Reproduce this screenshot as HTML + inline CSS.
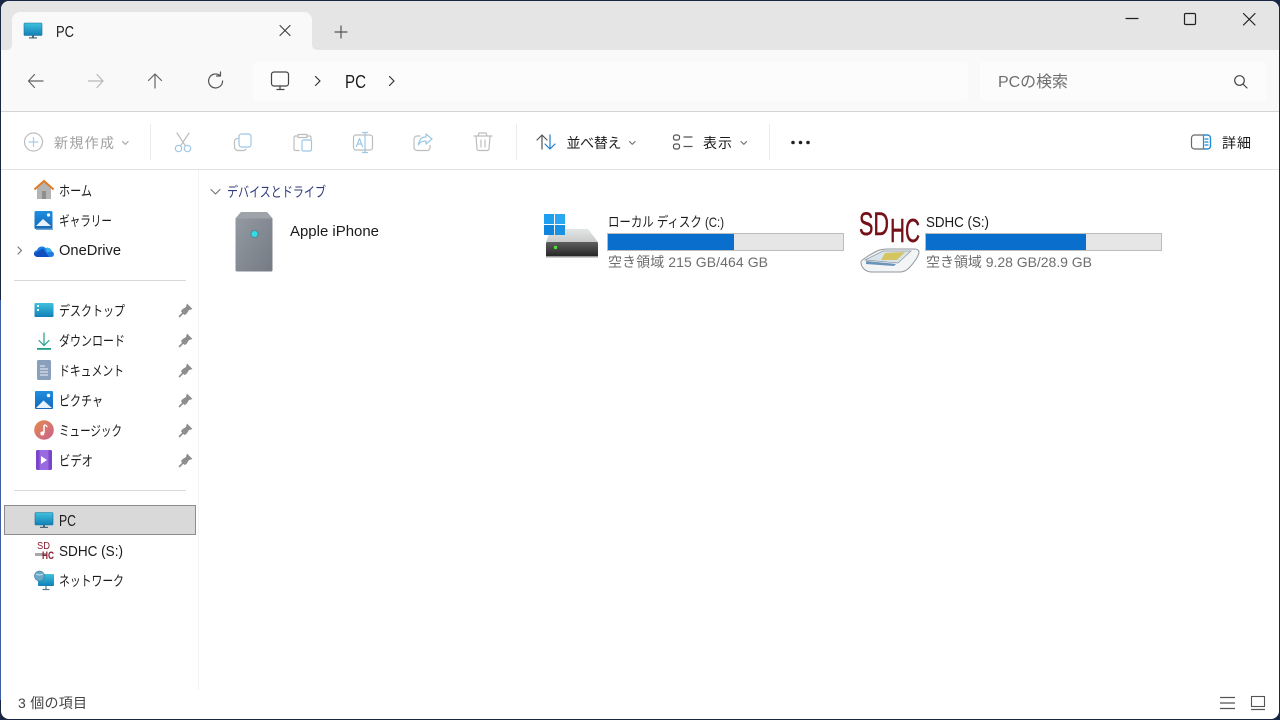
<!DOCTYPE html>
<html lang="ja"><head><meta charset="utf-8"><title>PC</title>
<style>
html,body{margin:0;padding:0;width:1280px;height:720px;overflow:hidden;background:#1a2744}
svg{display:block}
text{font-family:"Liberation Sans","Noto Sans CJK JP",sans-serif;font-size:14px;fill:#1b1b1b}
.g{fill:#6e6e6e}
.d{fill:#a0a0a0}
.s{fill:none;stroke-width:1.2;stroke-linecap:round;stroke-linejoin:round}
</style></head><body>
<svg width="1280" height="720" viewBox="0 0 1280 720" xmlns="http://www.w3.org/2000/svg">
<defs>
<linearGradient id="mon" x1="0" y1="0" x2="0" y2="1"><stop offset="0" stop-color="#3fc1dc"/><stop offset="1" stop-color="#1180b8"/></linearGradient>
<linearGradient id="twr" x1="0" y1="0" x2="1" y2="1"><stop offset="0" stop-color="#959ba3"/><stop offset="1" stop-color="#757b84"/></linearGradient>
<linearGradient id="hdd" x1="0" y1="0" x2="0" y2="1"><stop offset="0" stop-color="#5f5f5f"/><stop offset="1" stop-color="#232323"/></linearGradient>
<linearGradient id="hddt" x1="0" y1="0" x2="0" y2="1"><stop offset="0" stop-color="#e4e6e6"/><stop offset="1" stop-color="#c6c9c9"/></linearGradient>
<linearGradient id="mus" x1="0" y1="0" x2="1" y2="1"><stop offset="0" stop-color="#e58a4e"/><stop offset="1" stop-color="#c8618f"/></linearGradient>
<linearGradient id="pic" x1="0" y1="0" x2="0" y2="1"><stop offset="0" stop-color="#1f8ee0"/><stop offset="1" stop-color="#1668b8"/></linearGradient>
<g id="pin"><path d="M1.500 -7 L7 -1.500 L5.500 -1 L3.500 -0.500 L1 3.500 L-3.500 -1 L0.500 -3.500 L1 -5.500Z" fill="#8c8c8c"/><path d="M-1.500 1.500 L-6 6" stroke="#8c8c8c" stroke-width="1.600" stroke-linecap="round"/><path d="M-3.500 -1 L1 3.500 L-1 4.500 L-4.500 1Z" fill="#8c8c8c"/></g>
<g id="monitor"><rect x="-9" y="-7" width="18" height="12.5" rx="1" fill="url(#mon)" stroke="#1b6f96" stroke-width=".6"/><rect x="-1" y="5.500" width="2" height="2" fill="#4a6a78"/><rect x="-4" y="7.300" width="8" height="1.200" fill="#4a6a78"/></g>
</defs>

<rect x="0" y="0" width="1280" height="720" fill="#1a2744"/>
<rect x="0" y="300" width="1.500" height="400" fill="#3a5fa5"/>
<rect x="1" y="1" width="1278" height="718" rx="8" fill="#ffffff"/>
<!-- title bar -->
<path d="M1 50V9a8 8 0 0 1 8-8H1271a8 8 0 0 1 8 8V50Z" fill="#e5e5e5"/>
<path d="M6 50 Q12 50 12 44 V20 a8 8 0 0 1 8-8 H304 a8 8 0 0 1 8 8 V44 Q312 50 318 50Z" fill="#f9f9f9"/>
<rect x="1" y="50" width="1278" height="61" fill="#f9f9f9"/>
<rect x="1" y="111" width="1278" height="1" fill="#d5d5d5"/>
<rect x="1" y="169" width="1278" height="1" fill="#e3e3e3"/>
<rect x="253" y="62" width="715" height="39" rx="4" fill="#fcfcfc"/>
<rect x="980" y="62" width="286" height="39" rx="4" fill="#fcfcfc"/>

<!-- tab -->
<use href="#monitor" transform="translate(33,30)"/>
<text x="56" y="37" style="font-size:15.500px" textLength="18" lengthAdjust="spacingAndGlyphs">PC</text>
<path d="M280 26.500l10 10M290 26.500l-10 10" transform="translate(0,-1)" class="s" stroke="#444"/>
<path d="M341 26v12M335 32h12" class="s" stroke="#555" stroke-width="1.300"/>

<!-- caption -->
<path d="M1126 18.500h12" class="s" stroke="#222"/>
<rect x="1184.500" y="13.500" width="11" height="11" rx="1.200" class="s" stroke="#222"/>
<path d="M1243.500 13.500l11.500 11.500M1255 13.500l-11.500 11.500" class="s" stroke="#222"/>

<!-- nav -->
<path d="M28.500 81H43M28.500 81l6-6.500M28.500 81l6 6.500" class="s" stroke="#666"/>
<path d="M103 81H88.500M103 81l-6-6.500M103 81l-6 6.500" class="s" stroke="#b8b8b8"/>
<path d="M155 88V74M155 74l-6.500 6.500M155 74l6.500 6.500" class="s" stroke="#666"/>
<path d="M220 75.500a7 7 0 1 0 2.600 5.500M220.500 72v4h-4" class="s" stroke="#555"/>
<rect x="271.500" y="72" width="17" height="14" rx="2.500" class="s" stroke="#444"/>
<path d="M277 89.500h7M280 86v3.500" class="s" stroke="#444"/>
<path d="M315.500 76.500l4.500 4.500-4.500 4.500M389.500 76.500l4.500 4.500-4.500 4.500" class="s" stroke="#333" stroke-width="1.400"/>
<text x="345" y="88" style="font-size:18px" textLength="21" lengthAdjust="spacingAndGlyphs">PC</text>
<text x="998" y="87" class="g" style="font-size:16px" textLength="70" lengthAdjust="spacingAndGlyphs">PCの検索</text>
<circle cx="1239.500" cy="80.500" r="4.800" class="s" stroke="#444"/>
<path d="M1243 84l4 4" class="s" stroke="#444"/>

<!-- command bar -->
<circle cx="33.500" cy="142" r="9" class="s" stroke="#bdbdbd"/>
<path d="M33.500 137.500v9M29 142h9" class="s" stroke="#a8cfe8"/>
<text x="54" y="148" class="d" textLength="60" lengthAdjust="spacing">新規作成</text>
<path d="M122.500 141.500l2.800 2.800 2.800-2.800" class="s" stroke="#aaa" stroke-width="1"/>
<rect x="150" y="124" width="1" height="36" fill="#ececec"/>
<path d="M177 133l8.500 13M189 133l-8.500 13" class="s" stroke="#bdbdbd"/>
<circle cx="178.500" cy="148.500" r="3.200" class="s" stroke="#9cc8e6"/><circle cx="187.500" cy="148.500" r="3.200" class="s" stroke="#9cc8e6"/>
<rect x="239" y="134" width="12" height="13" rx="2.500" class="s" stroke="#9cc8e6"/>
<path d="M238 138.500a3 3 0 0 0-3.500 3V147a3.500 3.500 0 0 0 3.500 3.500h5.500a3 3 0 0 0 2.500-1.500" class="s" stroke="#bdbdbd"/>
<path d="M298 136h-2.500a1.500 1.500 0 0 0-1.500 1.500V149a1.500 1.500 0 0 0 1.500 1.500H299M308 136h2a1.500 1.500 0 0 1 1 1.500V140M298 134.500h9v3h-9z" class="s" stroke="#bdbdbd"/>
<rect x="302" y="140" width="9.500" height="11" rx="1.500" class="s" stroke="#9cc8e6"/>
<rect x="353.500" y="135" width="19" height="15" rx="2.500" class="s" stroke="#bdbdbd"/>
<path d="M365 132.500v20M362.500 132.500h5M362.500 152.500h5" class="s" stroke="#9cc8e6"/>
<path d="M356.500 146.500l3-8 3 8M357.500 144h4" class="s" stroke="#9cc8e6" stroke-width="1"/>
<path d="M420 136h-3a3 3 0 0 0-3 3v8.500a3 3 0 0 0 3 3h10.500a3 3 0 0 0 2.500-3v-2" class="s" stroke="#bdbdbd"/>
<path d="M426 134l6 5-6 5v-3c-4 0-6 1-7.500 4 .5-5 3-8 7.500-8z" class="s" stroke="#9cc8e6"/>
<path d="M474 136h18M478 136l1-3h7l1 3M476 136l1 13a2 2 0 0 0 2 1.500h8a2 2 0 0 0 2-1.500l1-13M481 140v7M485 140v7" class="s" stroke="#bdbdbd"/>
<rect x="516" y="124" width="1" height="36" fill="#ececec"/>
<path d="M542 149V135M542 135l-5 5M542 135l5 5" class="s" stroke="#555"/>
<path d="M550 135v14M550 149l-5-5M550 149l5-5" class="s" stroke="#1f7fc8"/>
<text x="566.500" y="148" textLength="55" lengthAdjust="spacing">並べ替え</text>
<path d="M629.500 141.500l2.800 2.800 2.800-2.800" class="s" stroke="#777" stroke-width="1"/>
<rect x="673.500" y="135" width="6" height="5" rx="2" class="s" stroke="#555"/>
<rect x="673.500" y="144" width="6" height="5" rx="2" class="s" stroke="#555"/>
<path d="M684 137h8M684 146.500h8" class="s" stroke="#555" stroke-width="1.300"/>
<text x="703" y="148" textLength="29">表示</text>
<path d="M741 141.500l2.800 2.800 2.800-2.800" class="s" stroke="#777" stroke-width="1"/>
<rect x="769" y="124" width="1" height="36" fill="#ececec"/>
<circle cx="793" cy="142.500" r="1.800" fill="#222"/><circle cx="800.500" cy="142.500" r="1.800" fill="#222"/><circle cx="808" cy="142.500" r="1.800" fill="#222"/>
<rect x="1191.500" y="135" width="19" height="14" rx="3" class="s" stroke="#666"/>
<path d="M1203.500 135h4a3 3 0 0 1 3 3v8a3 3 0 0 1-3 3h-4z" class="s" stroke="#1f8ad8" fill="#e6f2fb"/>
<path d="M1205 139h3M1205 142h3M1205 145h3" class="s" stroke="#1f8ad8" stroke-width="1"/>
<text x="1222" y="148" textLength="29">詳細</text>

<!-- sidebar -->
<rect x="198" y="170" width="1" height="520" fill="#f2f2f2"/>
<!-- home -->
<path d="M37 188v11h14v-11l-7-6z" fill="#b4b4b4"/><rect x="42" y="191" width="4" height="8" fill="#8e8e8e"/>
<path d="M35 189l9-8 9 8" fill="none" stroke="#e07c22" stroke-width="2" stroke-linecap="round"/>
<text x="59" y="196" textLength="33" lengthAdjust="spacingAndGlyphs">ホーム</text>
<!-- gallery -->
<rect x="34.500" y="211" width="18" height="18" rx="1.500" fill="url(#pic)"/>
<path d="M36 226l7-7 8 7z" fill="#e8f3fb"/><circle cx="48.500" cy="215" r="1.600" fill="#fff"/>
<rect x="36" y="228.500" width="17" height="1.500" fill="#6fa6d0"/>
<text x="59" y="226" textLength="53" lengthAdjust="spacingAndGlyphs">ギャラリー</text>
<!-- onedrive -->
<path d="M18 247l3.500 3.500-3.500 3.500" class="s" stroke="#777" stroke-width="1.300"/>
<path d="M38 257c-3 0-4-2-4-3.500 0-2 1.500-3 3-3.200 1-3.800 6-5 8.500-2.300 3-1 6 .8 6.300 3.500 1.300.3 2.200 1.500 2.200 2.800 0 1.700-1.300 2.700-2.700 2.700z" fill="#1f7be0"/>
<path d="M38 257c-3 0-4-2-4-3.500l9-5 6 8.500z" fill="#0f4fc0"/>
<path d="M45.500 248c3-1 6 .8 6.300 3.500l-5 1z" fill="#38b0f0"/>
<text x="59" y="255" style="font-size:14.500px" textLength="62" lengthAdjust="spacingAndGlyphs">OneDrive</text>
<rect x="14" y="280" width="172" height="1" fill="#d8d8d8"/>
<!-- desktop -->
<rect x="34.500" y="303" width="19" height="14" rx="1" fill="url(#mon)"/>
<rect x="37" y="305" width="2" height="2" fill="#dff6fb"/><rect x="37" y="309" width="2" height="2" fill="#dff6fb"/>
<text x="59" y="316" textLength="66" lengthAdjust="spacingAndGlyphs">デスクトップ</text>
<use href="#pin" transform="translate(185.500,310.500)"/>
<!-- download -->
<path d="M44 333v12M44 345.500l-5-5M44 345.500l5-5" class="s" stroke="#1fa08a" stroke-width="1.600"/>
<rect x="37" y="348" width="14" height="1.800" fill="#1fa08a"/>
<text x="59" y="346" textLength="66" lengthAdjust="spacingAndGlyphs">ダウンロード</text>
<use href="#pin" transform="translate(185.500,340.500)"/>
<!-- document -->
<rect x="37" y="360" width="14" height="20" rx="1.500" fill="#8a9fbc"/>
<path d="M40 366h5M40 369h8M40 372h8M40 375h8" stroke="#f0f3f8" stroke-width="1"/>
<text x="59" y="376" textLength="65" lengthAdjust="spacingAndGlyphs">ドキュメント</text>
<use href="#pin" transform="translate(185.500,370.500)"/>
<!-- pictures -->
<rect x="35" y="391" width="18" height="18" rx="1" fill="url(#pic)"/>
<path d="M36 408l7.500-7.500 8.500 7.500z" fill="#e8f3fb"/><circle cx="48.500" cy="395.500" r="1.700" fill="#fff"/>
<text x="59" y="406" textLength="44" lengthAdjust="spacingAndGlyphs">ピクチャ</text>
<use href="#pin" transform="translate(185.500,400.500)"/>
<!-- music -->
<circle cx="44" cy="430" r="9.800" fill="url(#mus)"/>
<path d="M44 425v8" stroke="#fff" stroke-width="1.500"/><path d="M44 425c1.500 0 3 .8 3 2.300" fill="none" stroke="#fff" stroke-width="1.300"/><circle cx="42.300" cy="433.500" r="2" fill="#fff"/>
<text x="59" y="436" textLength="63" lengthAdjust="spacingAndGlyphs">ミュージック</text>
<use href="#pin" transform="translate(185.500,430.500)"/>
<!-- video -->
<rect x="36" y="450" width="16" height="20" rx="1.500" fill="#7a45c8"/>
<rect x="39.500" y="450" width="9" height="20" fill="#9a6ae0"/>
<path d="M41 456l6 4-6 4z" fill="#fff"/>
<text x="59" y="466" textLength="34" lengthAdjust="spacingAndGlyphs">ビデオ</text>
<use href="#pin" transform="translate(185.500,460.500)"/>
<rect x="14" y="490" width="172" height="1" fill="#d8d8d8"/>
<!-- PC -->
<rect x="4.500" y="505.500" width="191" height="29" fill="#d9d9d9" stroke="#8c8c8c"/>
<use href="#monitor" transform="translate(44,519.500)"/>
<text x="59" y="526" style="font-size:15.500px" textLength="17" lengthAdjust="spacingAndGlyphs">PC</text>
<!-- SDHC -->
<rect x="35" y="553" width="11" height="3" fill="#a8a8a8"/>
<text x="37" y="549" style="font-size:10.500px;fill:#8a1c2c" textLength="13" lengthAdjust="spacingAndGlyphs">SD</text>
<text x="42" y="559" style="font-size:11px;font-weight:bold;fill:#8a1c2c" textLength="12" lengthAdjust="spacingAndGlyphs">HC</text>
<text x="59" y="556" style="font-size:14.500px" textLength="64" lengthAdjust="spacingAndGlyphs">SDHC (S:)</text>
<!-- network -->
<rect x="38" y="574" width="16" height="12" rx="1" fill="url(#mon)"/>
<path d="M46 586v3M42.500 589.500h7" stroke="#5a7a88" stroke-width="1.200"/>
<circle cx="39.500" cy="576" r="5" fill="#6aa8c8" stroke="#3a7898" stroke-width=".6"/><path d="M36 574q3.500 2 7 0" stroke="#d8eef8" fill="none"/>
<text x="59" y="586" textLength="65" lengthAdjust="spacingAndGlyphs">ネットワーク</text>

<!-- content header -->
<path d="M211 189.500l4.500 4.500 4.500-4.500" class="s" stroke="#777" stroke-width="1"/>
<text x="227" y="197" style="fill:#2f3a78" textLength="99" lengthAdjust="spacingAndGlyphs">デバイスとドライブ</text>

<!-- iPhone / tower icon -->
<path d="M235.500 218.500l5.500-6.500h26l5.500 6.500V270a1.500 1.500 0 0 1-1.500 1.500H237a1.500 1.500 0 0 1-1.500-1.500z" fill="url(#twr)"/>
<path d="M235.500 218.500l5.500-6.500h26l5.500 6.500z" fill="#9ea3a9"/>
<circle cx="254.500" cy="234" r="4.300" fill="#5c8a98"/><circle cx="254.500" cy="234" r="3" fill="#35dbe8"/>
<text x="290" y="236" style="font-size:15px" textLength="89" lengthAdjust="spacingAndGlyphs">Apple iPhone</text>

<!-- C drive -->
<path d="M551 229h37l10 13v1h-52v-1z" fill="url(#hddt)"/>
<rect x="546" y="242" width="52" height="15" rx="1.500" fill="url(#hdd)"/>
<rect x="546" y="256" width="52" height="1.500" fill="#999"/>
<circle cx="555.500" cy="247.500" r="1.700" fill="#4fe03a"/>
<rect x="544" y="214" width="10" height="10" fill="#1f9ff0"/><rect x="555" y="214" width="10" height="10" fill="#2aa8f2"/>
<rect x="544" y="225" width="10" height="10" fill="#0f86dc"/><rect x="555" y="225" width="10" height="10" fill="#1a92e4"/>
<text x="608" y="227" textLength="116" lengthAdjust="spacingAndGlyphs">ローカル ディスク (C:)</text>
<rect x="607.500" y="233.500" width="236" height="17" fill="#e6e6e6" stroke="#bcbcbc"/>
<rect x="608" y="234" width="126" height="16" fill="#0a6fcc"/>
<text x="608" y="267" class="g" textLength="160" lengthAdjust="spacing">空き領域 215 GB/464 GB</text>

<!-- SD drive -->
<text x="859" y="235" style="font-size:32px;fill:#741018;stroke:#741018;stroke-width:.5" textLength="30" lengthAdjust="spacingAndGlyphs">SD</text>
<text x="890" y="242" style="font-size:33px;fill:#741018;stroke:#741018;stroke-width:.5" textLength="30" lengthAdjust="spacingAndGlyphs">HC</text>
<path d="M861 262c0-2 10-8 16-11 3-1.500 7-2 12-2h25c3 0 5 1 5 3 0 4-6 12-10 16-2 2-5 4-9 4h-28c-6 0-11-4-11-10z" fill="#f2f4f6" stroke="#8f969c"/>
<path d="M865 260l18-9 28 0-13 12z" fill="#d8e4ec" stroke="#8f969c" stroke-width=".7"/>
<path d="M885 253l20-1-8 8h-16z" fill="#d4c560"/>
<path d="M866 261l30 3-2 2-28-2z" fill="#6a94b8"/>
<text x="926" y="227" style="font-size:14.500px" textLength="63" lengthAdjust="spacingAndGlyphs">SDHC (S:)</text>
<rect x="925.500" y="233.500" width="236" height="17" fill="#e6e6e6" stroke="#bcbcbc"/>
<rect x="926" y="234" width="160" height="16" fill="#0a6fcc"/>
<text x="926" y="267" class="g" textLength="166" lengthAdjust="spacing">空き領域 9.28 GB/28.9 GB</text>

<!-- status -->
<text x="18" y="708" style="fill:#444" textLength="69" lengthAdjust="spacing">3 個の項目</text>
<path d="M1220 697.500h15M1220 703h15M1220 708.500h15" stroke="#555" stroke-width="1.200"/>
<rect x="1251.500" y="696.500" width="13" height="10" fill="none" stroke="#555" stroke-width="1.100"/>
<path d="M1251 709.500h14" stroke="#555" stroke-width="1.200"/>
</svg>
</body></html>
